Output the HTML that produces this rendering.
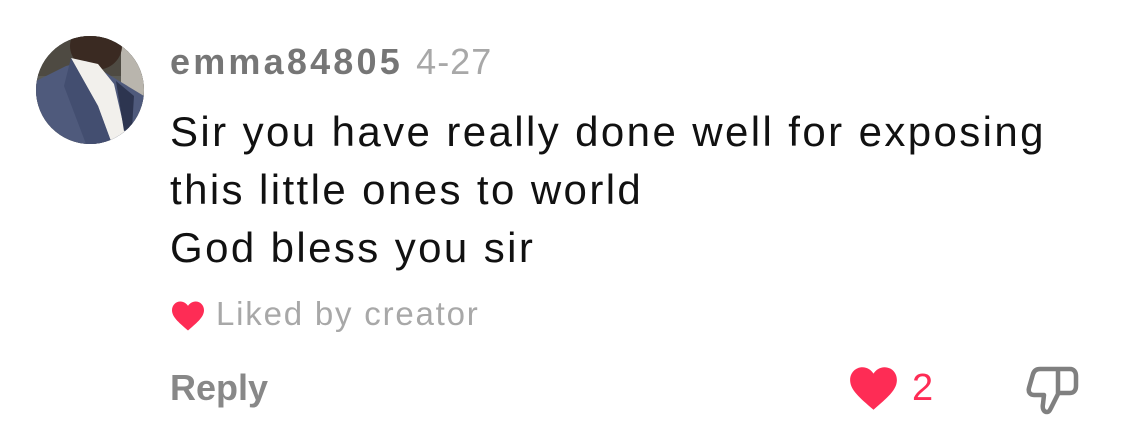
<!DOCTYPE html>
<html><head><meta charset="utf-8"><style>
body{margin:0;width:1125px;height:447px;background:#fff;position:relative;overflow:hidden;font-family:"Liberation Sans",Arial,sans-serif;}
.av{position:absolute;left:36px;top:36px;width:108px;height:108px;border-radius:50%;overflow:hidden;background:#3b3f45}
.t{position:absolute;white-space:nowrap}
</style></head><body>
<div class="av"><svg width="108" height="108" viewBox="0 0 108 108">
<rect width="108" height="108" fill="#5a5a55"/>
<rect x="0" y="0" width="108" height="40" fill="#4e4a42"/>
<rect x="85" y="0" width="23" height="60" fill="#b9b5ad"/>
<ellipse cx="60" cy="10" rx="26" ry="24" fill="#3a2a22"/>
<path d="M0 45 L30 30 L50 25 L75 40 L108 60 L108 108 L0 108Z" fill="#4f5a7c"/>
<path d="M35 22 L62 28 L78 48 L90 100 L76 108 L62 70 Z" fill="#f2f0ec"/>
<path d="M35 22 L62 70 L76 108 L50 108 L28 50 Z" fill="#434e70"/>
<path d="M80 45 L98 60 L96 92 L88 95 Z" fill="#2d3550"/>
</svg></div>
<div class="t" style="left:170px;top:41px;font-size:36px;color:#767676;font-weight:bold;letter-spacing:3.2px">emma84805 <span style="font-weight:normal;color:#a8a8a8;letter-spacing:1px">4-27</span></div>
<div class="t" style="left:170px;top:103px;font-size:42px;line-height:58px;color:#111;letter-spacing:2.4px">Sir you have really done well for exposing<br>this little ones to world<br>God bless you sir</div>
<svg class="t" style="left:170px;top:300px" width="36" height="32" viewBox="0 0 24 22"><path d="M12 21 C5 15 1 11.5 1 7 C1 3.5 3.6 1 6.8 1 C9 1 10.8 2.2 12 4 C13.2 2.2 15 1 17.2 1 C20.4 1 23 3.5 23 7 C23 11.5 19 15 12 21Z" fill="#fe2c55"/></svg>
<div class="t" style="left:216px;top:295px;font-size:33px;color:#a8a8a8;letter-spacing:1.8px">Liked by creator</div>
<div class="t" style="left:170px;top:367px;font-size:36px;color:#888;font-weight:bold">Reply</div>
<svg class="t" style="left:848px;top:365px" width="51" height="47" viewBox="0 0 24 22"><path d="M12 21 C5 15 1 11.5 1 7 C1 3.5 3.6 1 6.8 1 C9 1 10.8 2.2 12 4 C13.2 2.2 15 1 17.2 1 C20.4 1 23 3.5 23 7 C23 11.5 19 15 12 21Z" fill="#fe2c55"/></svg>
<div class="t" style="left:912px;top:367px;font-size:38px;color:#fe2c55">2</div>
<svg class="t" style="left:1026px;top:364px" width="54" height="52" viewBox="0 0 54 52"><path d="M32 5 H14 C10 5 8 7 7 10 L3 24 C2 28 4 31 8 31 H18 L17 40 C16 45 18 48 21 48 C23 48 24 46 25 44 L32 30 V5 Z M32 5 H44 C48 5 50 8 50 12 V22 C50 26 48 29 44 29 H34" fill="none" stroke="#808080" stroke-width="4.5" stroke-linejoin="round" stroke-linecap="round"/></svg>
</body></html>
